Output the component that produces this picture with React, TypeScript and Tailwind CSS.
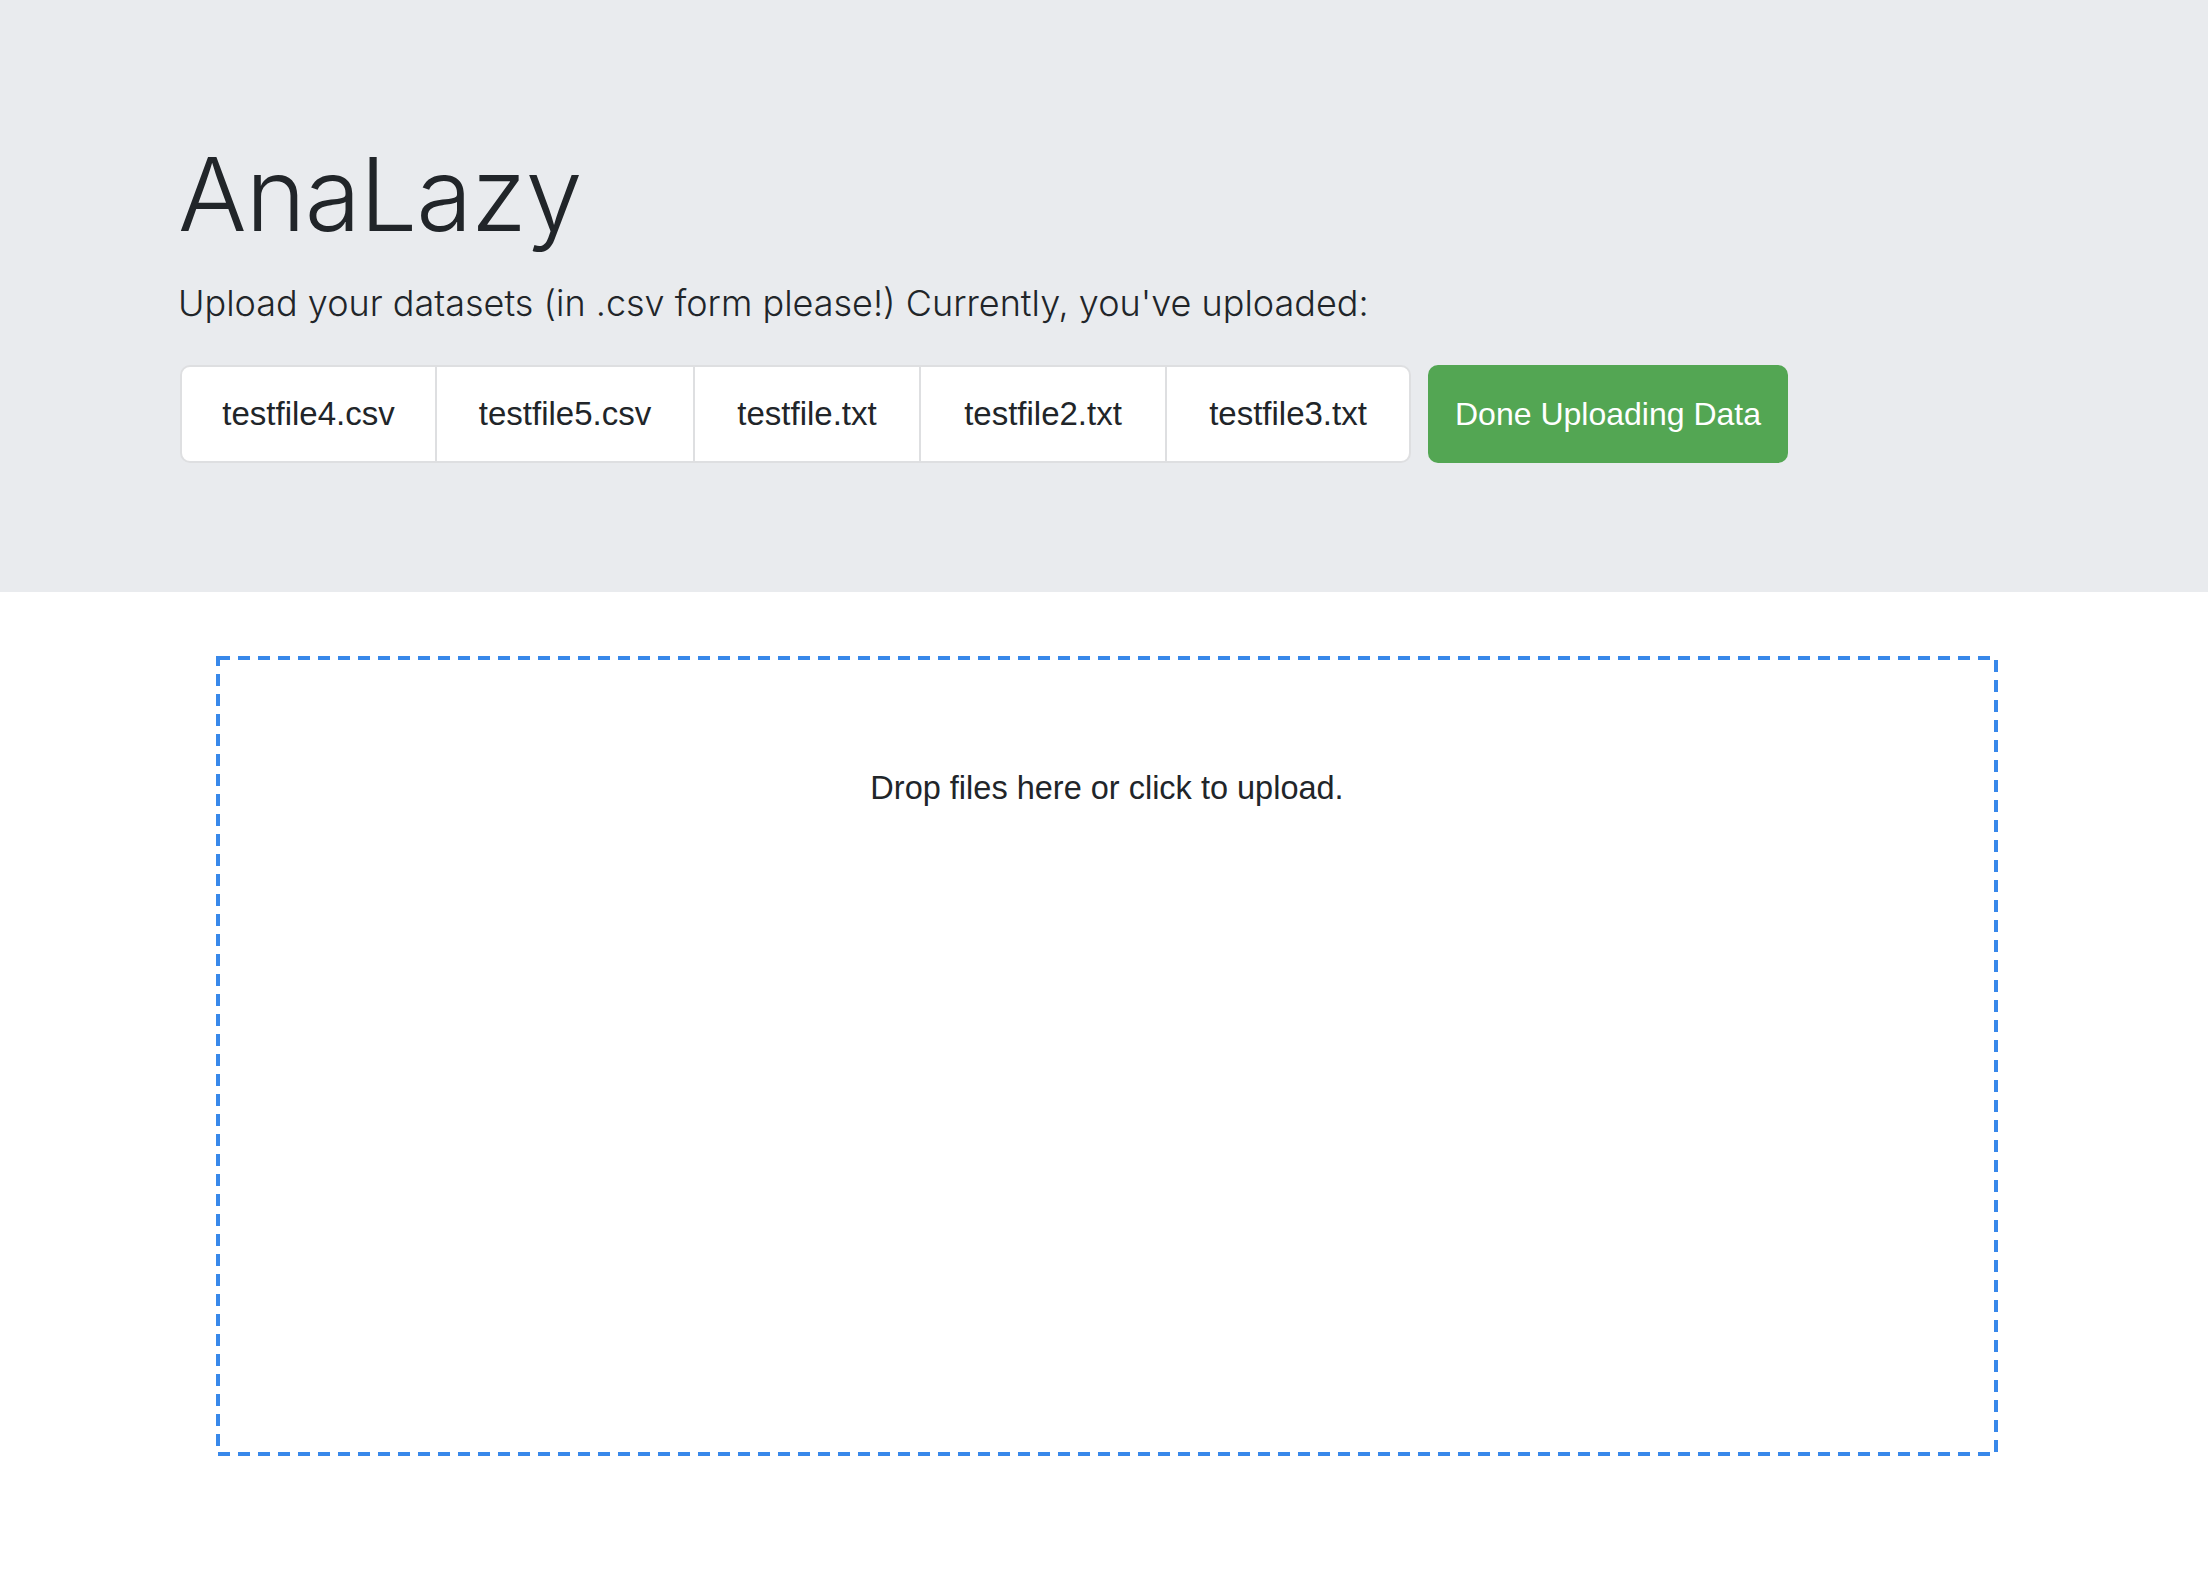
import React from "react";

const files = [
  { name: "testfile4.csv", w: "w-[253px]", first: true },
  { name: "testfile5.csv", w: "w-[258px]", first: false },
  { name: "testfile.txt", w: "w-[226px]", first: false },
  { name: "testfile2.txt", w: "w-[246px]", first: false },
  { name: "testfile3.txt", w: "w-[244px]", first: false },
];

export default function App() {
  return (
    <div className="min-h-[1578px] bg-white text-[#212529] font-['Liberation_Sans',Arial,sans-serif]">
      <div className="bg-[#e9ebee] h-[592px] pt-[132px] pl-[178px]">
        <h1 className="font-['Inter',sans-serif] font-light text-[102px] leading-[124px] tracking-[-1px]">
          AnaLazy
        </h1>
        <p className="mt-[20px] font-['Inter',sans-serif] font-light text-[36px] leading-[54px]">
          Upload your datasets (in .csv form please!) Currently, you've uploaded:
        </p>
        <div className="mt-[35px] ml-[2px] flex items-start">
          <div className="flex border-2 border-[#dedfe1] rounded-[10px] bg-white overflow-hidden">
            {files.map((f) => (
              <div
                key={f.name}
                className={
                  f.w +
                  " h-[94px] flex items-center justify-center text-[33px] leading-[48px] " +
                  (f.first ? "" : "border-l-2 border-[#dedfe1]")
                }
              >
                {f.name}
              </div>
            ))}
          </div>
          <div className="ml-[17px] w-[360px] h-[98px] rounded-[10px] bg-[#53a653] text-white flex items-center justify-center text-[32px] leading-[48px]">
            Done Uploading Data
          </div>
        </div>
      </div>
      <div className="pt-[64px] pl-[216px]">
        <div className="relative w-[1782px] h-[800px] pt-[108px] text-center text-[32.5px] leading-[48px]">
          <svg
            className="absolute inset-0 pointer-events-none"
            width="1782"
            height="800"
            viewBox="0 0 1782 800"
          >
            <rect
              x="2"
              y="2"
              width="1778"
              height="796"
              fill="none"
              stroke="#3888ea"
              strokeWidth="4"
              strokeDasharray="12 8"
            />
          </svg>
          <span className="relative">Drop files here or click to upload.</span>
        </div>
      </div>
    </div>
  );
}
